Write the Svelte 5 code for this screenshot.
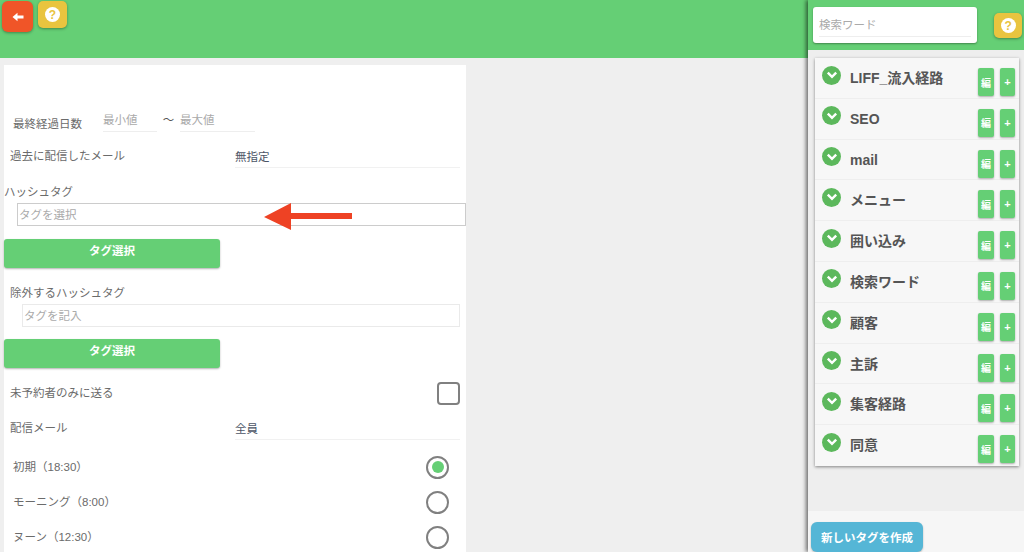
<script>
  const tags = ["LIFF_流入経路", "SEO", "mail", "メニュー", "囲い込み", "検索ワード", "顧客", "主訴", "集客経路", "同意"];
  const times = [
    { label: "初期（18:30）", on: true },
    { label: "モーニング（8:00）", on: false },
    { label: "ヌーン（12:30）", on: false }
  ];
</script>

<div class="page">
  <main class="main">
    <header class="topbar">
      <button class="back" aria-label="戻る">
        <svg width="12" height="10" viewBox="0 0 12 10"><path d="M0.5 5 L5.5 0.8 V3.4 H11.5 V6.6 H5.5 V9.2 Z" fill="#fff" /></svg>
      </button>
      <button class="help small"><span class="q">?</span></button>
    </header>

    <form class="card">
      <div class="range">
        <span class="range-label">最終経過日数</span>
        <input class="line min" placeholder="最小値" />
        <span class="tilde">〜</span>
        <input class="line max" placeholder="最大値" />
      </div>

      <div class="pick first">
        <span class="label">過去に配信したメール</span>
        <div class="value">無指定</div>
      </div>

      <div class="tag-label">ハッシュタグ</div>
      <div class="tag-wrap">
        <input class="tag strong" placeholder="タグを選択" />
        <svg class="arrow" width="90" height="28" viewBox="0 0 90 28"><path d="M0 14 L27 0 V10 H88 V16 H27 V27 Z" fill="#ee4224" /></svg>
      </div>
      <button type="button" class="select">タグ選択</button>

      <div class="label exclude">除外するハッシュタグ</div>
      <input class="tag soft" placeholder="タグを記入" />
      <button type="button" class="select second">タグ選択</button>

      <div class="check-row">
        <span class="label">未予約者のみに送る</span>
        <span class="check"></span>
      </div>

      <div class="pick">
        <span class="label">配信メール</span>
        <div class="value">全員</div>
      </div>

      <div class="times">
        {#each times as t}
          <div class="time">
            <span>{t.label}</span>
            <span class="radio">{#if t.on}<i></i>{/if}</span>
          </div>
        {/each}
      </div>
    </form>
  </main>

  <aside class="side">
    <div class="side-top">
      <div class="search"><input placeholder="検索ワード" /></div>
      <button class="help"><span class="q">?</span></button>
    </div>

    <div class="side-body">
      <ul class="tags">
        {#each tags as tag}
          <li>
            <span class="chev">
              <svg width="12" height="8" viewBox="0 0 12 8"><path d="M1.8 1.6 L6 5.8 L10.2 1.6" fill="none" stroke="#fff" stroke-width="2.4" /></svg>
            </span>
            <span class="name">{tag}</span>
            <button class="mini ed">編</button>
            <button class="mini">+</button>
          </li>
        {/each}
      </ul>
    </div>

    <div class="side-foot">
      <button class="create">新しいタグを作成</button>
    </div>
  </aside>
</div>

<style>
  :global(body) {
    margin: 0;
    background: #efefef;
    overflow: hidden;
  }

  * {
    box-sizing: border-box;
  }

  .page {
    display: flex;
    height: 552px;
    font-family: "Liberation Sans", "Noto Sans CJK JP", sans-serif;
    font-size: 11.5px;
    color: #6b6b6b;
    overflow: hidden;
  }

  button {
    font-family: inherit;
    border: none;
    padding: 0;
    cursor: pointer;
  }

  input {
    font-family: inherit;
    font-size: 11.5px;
    outline: none;
    background: transparent;
    color: #666;
  }

  input::placeholder {
    color: #aaa;
    opacity: 1;
  }

  .main {
    flex: 1;
    min-width: 0;
  }

  .topbar {
    display: flex;
    gap: 5px;
    align-items: flex-start;
    height: 57.5px;
    padding: 1px 0 0 2px;
    background: #65cf75;
  }

  .back {
    display: flex;
    align-items: center;
    justify-content: center;
    width: 31px;
    height: 31px;
    border-radius: 6px;
    background: #f05528;
    box-shadow: 0 1px 3px rgba(0, 0, 0, 0.35);
  }

  .help {
    display: flex;
    align-items: center;
    justify-content: center;
    width: 28px;
    height: 25px;
    border-radius: 5px;
    background: #e9c43f;
    box-shadow: 0 1px 3px rgba(0, 0, 0, 0.35);
  }

  .help.small {
    width: 29px;
    height: 27px;
  }

  .q {
    display: flex;
    align-items: center;
    justify-content: center;
    width: 15px;
    height: 15px;
    border-radius: 50%;
    background: #fff;
    color: #e9c43f;
    font-size: 12px;
    font-weight: 700;
    line-height: 1;
  }

  .card {
    width: 462px;
    height: 487px;
    margin: 7.5px 0 0 4px;
    padding-top: 43px;
    background: #fff;
  }

  .range {
    display: flex;
    align-items: flex-start;
    height: 24px;
  }

  .range-label {
    width: 99px;
    padding: 8px 0 0 9px;
    line-height: 17px;
  }

  .line {
    height: 24px;
    border: none;
    border-bottom: 1px solid #eee;
    padding: 0;
  }

  .min {
    width: 54px;
  }

  .max {
    width: 75px;
  }

  .tilde {
    width: 23px;
    text-align: center;
    line-height: 24px;
    color: #555;
  }

  .pick {
    display: flex;
    align-items: flex-start;
    padding: 0 6px;
    height: 28px;
    margin-top: 11px;
  }

  .pick.first {
    margin-top: 12px;
  }

  .label {
    display: block;
    line-height: 17px;
  }

  .pick .label {
    width: 225px;
    padding-top: 4px;
  }

  .value {
    flex: 1;
    height: 24px;
    padding-top: 5px;
    line-height: 17px;
    color: #4c5566;
    border-bottom: 1.5px solid #f1f1f1;
  }

  .tag-label {
    margin-top: 11.5px;
    line-height: 17px;
  }

  .tag-wrap {
    position: relative;
    margin-top: 2.5px;
  }

  .tag {
    display: block;
    height: 23px;
    padding: 0 1px;
  }

  .strong {
    width: 449px;
    margin-left: 13px;
    border: 1px solid #ccc;
  }

  .soft {
    width: 438px;
    margin: 2.5px 0 0 18px;
    border: 1px solid #eaeaea;
  }

  .arrow {
    position: absolute;
    left: 260px;
    top: 0;
  }

  .select {
    display: block;
    width: 216px;
    height: 29px;
    margin-top: 13px;
    padding-bottom: 8px;
    border-radius: 3px;
    background: #65cf75;
    color: #fff;
    font-size: 11.5px;
    font-weight: 700;
    box-shadow: 0 1px 2px rgba(0, 0, 0, 0.3);
  }

  .select.second {
    margin-top: 12px;
  }

  .exclude {
    margin: 16.5px 0 0 6px;
  }

  .check-row {
    display: flex;
    align-items: flex-start;
    justify-content: space-between;
    height: 23px;
    margin-top: 14px;
    padding: 0 6px;
  }

  .check-row .label {
    padding-top: 3px;
  }

  .check {
    width: 23px;
    height: 23px;
    border: 2px solid #808080;
    border-radius: 4px;
  }

  .times {
    margin-top: 5.5px;
    padding: 0 17px 0 9px;
  }

  .time {
    display: flex;
    align-items: center;
    justify-content: space-between;
    height: 35px;
  }

  .time span:first-child {
    margin-top: -2px;
  }

  .radio {
    display: flex;
    align-items: center;
    justify-content: center;
    width: 23px;
    height: 23px;
    border: 2px solid #808080;
    border-radius: 50%;
  }

  .radio i {
    display: block;
    width: 12px;
    height: 12px;
    border-radius: 50%;
    background: #65cf75;
  }

  .side {
    display: flex;
    flex-direction: column;
    flex: none;
    width: 216px;
    background: #f6f6f6;
    box-shadow: -2px 0 4px rgba(0, 0, 0, 0.55);
    position: relative;
  }

  .side-top {
    display: flex;
    align-items: flex-start;
    flex: none;
    height: 50px;
    padding: 7px 2px 0 5px;
    background: #65cf75;
    gap: 17px;
  }

  .search {
    width: 165px;
    height: 36px;
    padding: 0 6px;
    background: #fff;
    border-radius: 3px;
    box-shadow: 0 1px 2px rgba(0, 0, 0, 0.35);
  }

  .search input {
    width: 100%;
    height: 30px;
    padding: 7px 0 0;
    border: none;
    border-bottom: 1px solid #eee;
  }

  .side-top .help {
    margin-top: 6px;
  }

  .side-body {
    flex: none;
    height: 461px;
    padding: 8px 5px 0 7px;
    background: #eee;
  }

  .tags {
    list-style: none;
    margin: 0;
    padding: 0;
    background: #f7f7f7;
    box-shadow: 0 1px 3px rgba(0, 0, 0, 0.45);
  }

  .tags li {
    display: flex;
    align-items: flex-start;
    height: 40.8px;
    padding: 7.5px 4px 0 7px;
    border-bottom: 1px solid #eee;
  }

  .tags li:last-child {
    border-bottom: none;
  }

  .chev {
    display: flex;
    align-items: center;
    justify-content: center;
    flex: none;
    width: 19px;
    height: 19px;
    border-radius: 50%;
    background: #5cb85c;
  }

  .name {
    flex: 1;
    margin-left: 9px;
    padding-top: 2.5px;
    font-size: 14px;
    font-weight: 700;
    line-height: 20px;
    color: #555;
  }

  .mini {
    flex: none;
    width: 15px;
    height: 28px;
    margin: 2.5px 0 0 6px;
    border-radius: 2px;
    background: #65cf75;
    color: #fff;
    font-size: 11px;
    font-weight: 700;
    box-shadow: 0 1px 2px rgba(0, 0, 0, 0.3);
  }

  .ed {
    width: 16px;
    font-size: 10px;
  }

  .side-foot {
    flex: 1;
    padding: 11px 0 0 3px;
  }

  .create {
    display: block;
    width: 112px;
    height: 30px;
    border-radius: 6px;
    background: #55b6d6;
    color: #fff;
    font-size: 11.5px;
    font-weight: 700;
    box-shadow: 0 1px 2px rgba(0, 0, 0, 0.25);
  }
</style>
